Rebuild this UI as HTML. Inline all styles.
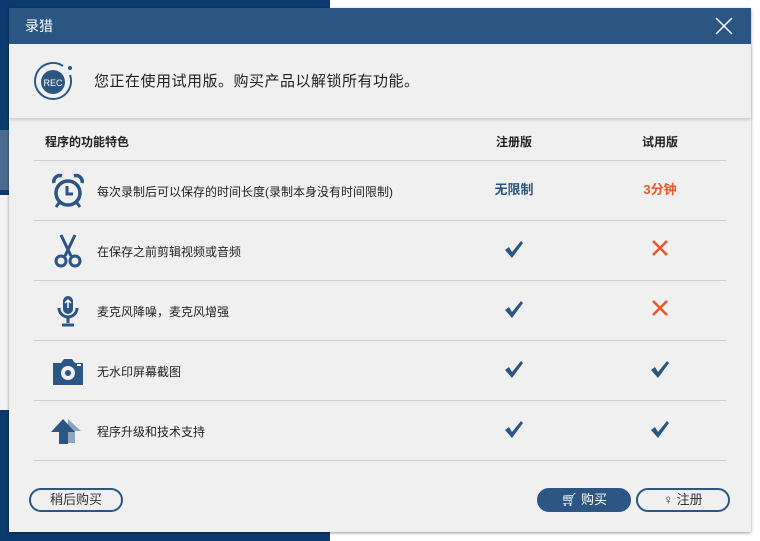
<!DOCTYPE html>
<html><head><meta charset="utf-8"><style>
html,body{margin:0;width:760px;height:541px;overflow:hidden}
body{position:relative;font-family:"Liberation Sans","Noto Sans CJK SC",sans-serif;background:#0d3a6e;}
*{box-sizing:border-box}
.bgr{position:absolute;left:330px;top:0;width:430px;height:541px;background:#fff}
.bgl{position:absolute;left:0;top:130px;width:12px;height:60px;background:#4a6a8f}
.bgw{position:absolute;left:0;top:195px;width:12px;height:215px;background:#f3f3f3}
.dlg{position:absolute;left:9px;top:8px;width:742px;height:524px;background:#f0f0f0;box-shadow:0 1px 3px rgba(0,0,0,.4)}
.tb{height:36px;background:#2b5582;color:#fff;font-size:14px;line-height:36px;padding-left:16px}
.x{position:absolute;right:18px;top:9px;width:18px;height:18px}
.hd{height:74px;position:relative;box-shadow:0 2px 3px rgba(0,0,0,.15);background:#f0f0f0}
.hd .t{position:absolute;left:85px;top:26px;font-size:15px;color:#222;letter-spacing:.5px}
.row{position:absolute;left:25px;width:692px;border-bottom:1px solid #cfcfcf;height:60px}
.row .n{position:absolute;left:63px;top:22px;font-size:12px;color:#222}
.row .ic{position:absolute;left:16px;top:12px;width:36px;height:36px}
.c1,.c2{position:absolute;top:18px;width:60px;text-align:center;font-size:13px;font-weight:bold}
.c1{left:450px}.c2{left:596px}
.btn{position:absolute;top:480px;height:24px;border:2px solid #2b5582;border-radius:13px;font-size:13px;color:#2b5582;text-align:center;line-height:20px}
</style></head><body>
<div class="bgr"></div><div class="bgl"></div><div class="bgw"></div>
<div class="dlg">
<div class="tb">录猎</div>
<svg class="x" viewBox="0 0 18 18"><path d="M1 1L17 17M17 1L1 17" stroke="#fff" stroke-width="1.5"/></svg>
<div class="hd">
<svg style="position:absolute;left:24px;top:18px" width="44" height="40" viewBox="0 0 44 40"><path d="M30 4A18 18 0 1 0 37 13" fill="none" stroke="#2b5582" stroke-width="2"/><circle cx="37" cy="6" r="2" fill="#2b5582"/><circle cx="20" cy="20" r="12" fill="#2b5582"/><text x="20" y="24" font-size="9" fill="#fff" text-anchor="middle" font-family="Liberation Sans">REC</text></svg>
<div class="t">您正在使用试用版。购买产品以解锁所有功能。</div>
</div>
<div class="row" style="top:110px;height:43px"><div style="position:absolute;left:11px;top:15px;font-size:12px;font-weight:bold;color:#222">程序的功能特色</div><div class="c1" style="top:15px;font-size:12px;color:#222">注册版</div><div class="c2" style="top:15px;font-size:12px;color:#222">试用版</div></div>
<div class="row" style="top:153px"><svg class="ic" viewBox="0 0 36 36"><circle cx="18" cy="20" r="12" fill="none" stroke="#2b5582" stroke-width="3.5"/><path d="M4 10a6 6 0 0 1 8-7M32 10a6 6 0 0 0-8-7" fill="none" stroke="#2b5582" stroke-width="3.5"/><path d="M17 13v8h6" fill="none" stroke="#2b5582" stroke-width="3"/><path d="M9 30l-3 4M27 30l3 4" stroke="#2b5582" stroke-width="3"/></svg><div class="n">每次录制后可以保存的时间长度(录制本身没有时间限制)</div><div class="c1" style="color:#2b5582">无限制</div><div class="c2" style="color:#e8562a">3分钟</div></div>
<div class="row" style="top:213px"><svg class="ic" viewBox="0 0 36 36"><path d="M11 2l10 21M25 2L15 23" stroke="#2b5582" stroke-width="3"/><circle cx="11" cy="28" r="5" fill="none" stroke="#2b5582" stroke-width="3"/><circle cx="25" cy="28" r="5" fill="none" stroke="#2b5582" stroke-width="3"/></svg><div class="n">在保存之前剪辑视频或音频</div><div class="c1"><svg width="20" height="20" viewBox="0 0 20 20"><path d="M1 11l4-3 3 5L17 2l2 2L8 19z" fill="#2b5582"/></svg></div><div class="c2"><svg width="18" height="18" viewBox="0 0 18 18"><path d="M2 2L16 16M16 2L2 16" stroke="#e8562a" stroke-width="2.5"/></svg></div></div>
<div class="row" style="top:273px"><svg class="ic" viewBox="0 0 36 36"><rect x="13" y="3" width="10" height="18" rx="5" fill="#2b5582"/><path d="M18 7v8M15 10l3-3 3 3" stroke="#fff" stroke-width="1.5" fill="none"/><path d="M9 15a9 9 0 0 0 18 0" fill="none" stroke="#2b5582" stroke-width="3"/><path d="M18 24v6M12 32h12" stroke="#2b5582" stroke-width="3"/></svg><div class="n">麦克风降噪，麦克风增强</div><div class="c1"><svg width="20" height="20" viewBox="0 0 20 20"><path d="M1 11l4-3 3 5L17 2l2 2L8 19z" fill="#2b5582"/></svg></div><div class="c2"><svg width="18" height="18" viewBox="0 0 18 18"><path d="M2 2L16 16M16 2L2 16" stroke="#e8562a" stroke-width="2.5"/></svg></div></div>
<div class="row" style="top:333px"><svg class="ic" viewBox="0 0 36 36"><path d="M3 10h8l3-4h8l3 4h8v22H3z" fill="#2b5582"/><circle cx="18" cy="20" r="7" fill="#f0f0f0"/><circle cx="18" cy="20" r="3" fill="#2b5582"/><rect x="27" y="11" width="4" height="2" fill="#fff"/></svg><div class="n">无水印屏幕截图</div><div class="c1"><svg width="20" height="20" viewBox="0 0 20 20"><path d="M1 11l4-3 3 5L17 2l2 2L8 19z" fill="#2b5582"/></svg></div><div class="c2"><svg width="20" height="20" viewBox="0 0 20 20"><path d="M1 11l4-3 3 5L17 2l2 2L8 19z" fill="#2b5582"/></svg></div></div>
<div class="row" style="top:393px"><svg class="ic" viewBox="0 0 36 36"><path d="M18 6l13 12h-6v12h-8z" fill="#8ea6c0"/><path d="M13 6l12 13h-7v12h-9V19H1z" fill="#2b5582"/></svg><div class="n">程序升级和技术支持</div><div class="c1"><svg width="20" height="20" viewBox="0 0 20 20"><path d="M1 11l4-3 3 5L17 2l2 2L8 19z" fill="#2b5582"/></svg></div><div class="c2"><svg width="20" height="20" viewBox="0 0 20 20"><path d="M1 11l4-3 3 5L17 2l2 2L8 19z" fill="#2b5582"/></svg></div></div>
<div class="btn" style="left:20px;width:94px;color:#333">稍后购买</div>
<div class="btn" style="left:528px;width:94px;background:#2b5582;color:#fff">🛒︎ 购买</div>
<div class="btn" style="left:627px;width:94px;color:#333">♀ 注册</div>
</div>
</body></html>
